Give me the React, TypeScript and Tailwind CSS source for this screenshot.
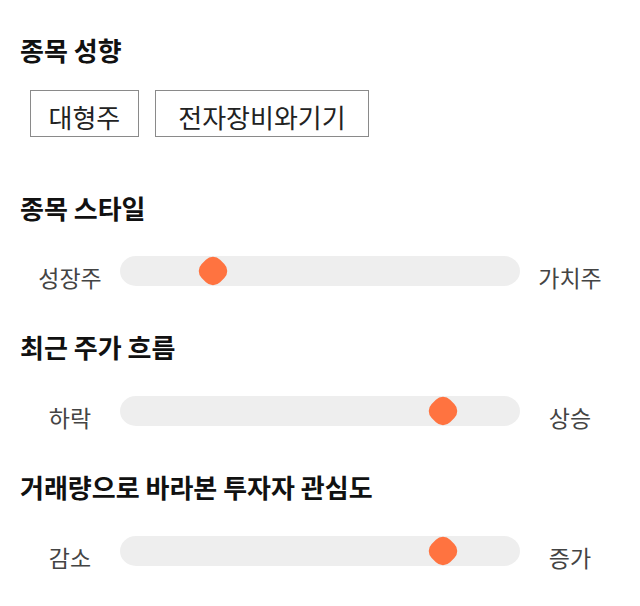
import React from 'react';

const font = { fontFamily: '"Noto Sans CJK KR", "Noto Sans", sans-serif' };

type SliderProps = {
  left: string;
  right: string;
  pos: number;
};

function Slider({ left, right, pos }: SliderProps) {
  return (
    <div className="flex items-start">
      <div className="w-[100px] shrink-0 pt-[6px] text-center text-[23px] leading-[30px] text-[#444]">{left}</div>
      <div className="relative h-[30px] flex-1 rounded-[16px/15px] bg-[#eeeeee]">
        <div
          className="absolute top-[2px] h-[26px] w-[26px] rotate-45 rounded-[10px] bg-[#ff7340]"
          style={{ left: pos }}
        />
      </div>
      <div className="w-[100px] shrink-0 pt-[6px] text-center text-[23px] leading-[30px] text-[#444]">{right}</div>
    </div>
  );
}

function Title({ children, className = '' }: { children: React.ReactNode; className?: string }) {
  return <h2 className={`text-[26px] font-bold leading-[30px] text-[#111] ${className}`}>{children}</h2>;
}

export default function App() {
  return (
    <div className="h-[606px] w-[640px] bg-white px-5 pt-[35px]" style={font}>
      <Title>종목 성향</Title>
      <div className="ml-[10px] mt-[25px] flex gap-4">
        <span className="flex h-[47px] items-center border border-[#8a8a8a] px-[17.5px] pt-[6px] text-[26px] text-[#222]">대형주</span>
        <span className="flex h-[47px] items-center border border-[#8a8a8a] px-[22.5px] pt-[6px] text-[26px] text-[#222]">전자장비와기기</span>
      </div>

      <Title className="mt-[56px]">종목 스타일</Title>
      <div className="mt-[33px]">
        <Slider left="성장주" right="가치주" pos={80} />
      </div>

      <Title className="mt-[40px]">최근 주가 흐름</Title>
      <div className="mt-[34px]">
        <Slider left="하락" right="상승" pos={310} />
      </div>

      <Title className="mt-[40px]">거래량으로 바라본 투자자 관심도</Title>
      <div className="mt-[34px]">
        <Slider left="감소" right="증가" pos={310} />
      </div>
    </div>
  );
}
